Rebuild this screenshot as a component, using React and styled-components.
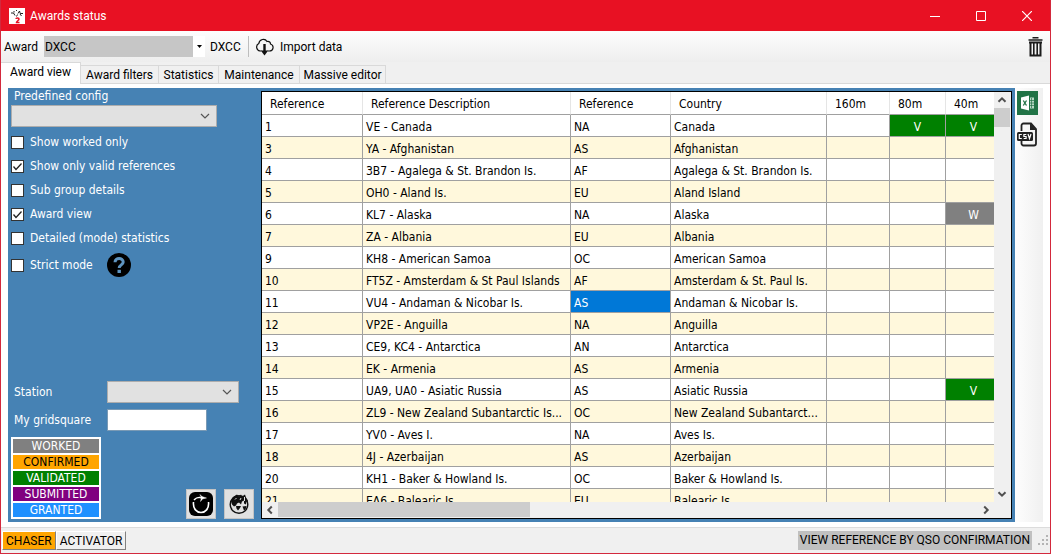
import React from "react";
import styled, { createGlobalStyle } from "styled-components";

const uiFont = `Roboto, "Noto Sans", "Liberation Sans", sans-serif`;
const gridFont = `"DejaVu Sans Condensed", "DejaVu Sans", "Liberation Sans", sans-serif`;

const GlobalStyle = createGlobalStyle`
  *, *::before, *::after { box-sizing: border-box; }
  body { margin: 0; font: 12px/16px ${uiFont}; color: #000; }
  button, input, select { font: inherit; color: inherit; margin: 0; border-radius: 0; }
  svg { display: block; flex: none; }
`;

const Window = styled.div`
  display: flex;
  flex-direction: column;
  height: 100vh;
  border: 1px solid #d3293d;
  border-top: 0;
  background: #f0f0f0;
  overflow: hidden;
`;

const TitleBar = styled.header`
  display: flex;
  align-items: center;
  height: 31px;
  flex: none;
  padding-left: 8px;
  background: #e81123;
  color: #fff;
`;

const Title = styled.h1`
  flex: 1;
  margin: 0 0 0 5px;
  font-size: 12px;
  font-weight: 400;
`;

const CaptionButton = styled.button`
  display: grid;
  place-items: center;
  width: 46px;
  height: 31px;
  padding: 0;
  border: 0;
  background: transparent;
`;

const Toolbar = styled.div`
  display: flex;
  align-items: center;
  height: 31px;
  flex: none;
  padding: 0 7px 0 3px;
  background: linear-gradient(#fdfdfd, #eeeeee);
`;

const ToolLabel = styled.label`
  width: 40px;
`;

const AwardBox = styled.span`
  display: grid;
  grid-template-columns: 149px 12px;
  align-items: center;
  height: 21px;
  margin-right: 5px;
  background: linear-gradient(90deg, #c6c6c6 149px, #fff 149px);
  & > * { grid-row: 1; }
  & > svg { grid-column: 2; justify-self: center; pointer-events: none; }
`;

const AwardSelect = styled.select`
  grid-column: 1 / 3;
  height: 21px;
  padding: 0 1px;
  border: 0;
  appearance: none;
  background: transparent;
`;

const ToolText = styled.span`
  width: 32px;
`;

const Separator = styled.span`
  width: 1px;
  height: 21px;
  margin: 0 6px;
  background: #bdbdbd;
`;

const ToolButton = styled.button`
  display: flex;
  align-items: center;
  gap: 6px;
  padding: 0;
  border: 0;
  background: transparent;
`;

const Spacer = styled.span`
  flex: 1;
`;

const TabStrip = styled.div`
  display: flex;
  align-items: flex-end;
  height: 22px;
  flex: none;
  box-shadow: inset 0 -1px #d9d9d9;
`;

const Tab = styled.button`
  height: ${(p) => (p.$active ? 22 : 19)}px;
  width: ${(p) => p.$width}px;
  padding: 0 0 ${(p) => (p.$active ? 3 : 0)}px;
  border: 1px solid #d9d9d9;
  border-width: ${(p) => (p.$active ? "1px 1px 0 0" : "1px 1px 1px 0")};
  background: ${(p) => (p.$active ? "#fff" : "#f0f0f0")};
  white-space: nowrap;
`;

const Page = styled.main`
  display: flex;
  flex: 1;
  min-height: 0;
  padding: 4px 7px 5px 7px;
  border-bottom: 1px solid #dcdcdc;
  background: #fff;
`;

const BluePanel = styled.div`
  display: flex;
  flex: 1;
  min-width: 0;
  padding: 3px 3px 3px 0;
  background: #4682b4;
`;

const Filters = styled.form`
  display: flex;
  flex-direction: column;
  width: 253px;
  flex: none;
  padding: 0 7px 0 3px;
  font-family: ${gridFont};
  color: #fff;
`;

const FieldLabel = styled.label`
  width: ${(p) => (p.$inline ? "96px" : "auto")};
  padding-left: 3px;
  line-height: ${(p) => (p.$inline ? "20px" : "10px")};
`;

const SelectBox = styled.span`
  display: grid;
  grid-template-columns: 1fr 17px;
  align-items: center;
  width: ${(p) => p.$width}px;
  & > * { grid-row: 1; }
  & > svg { grid-column: 2; pointer-events: none; }
`;

const Select = styled.select`
  grid-column: 1 / 3;
  height: 22px;
  border: 1px solid #adadad;
  background: #e1e1e1;
  color: #000;
  appearance: none;
`;

const ConfigField = styled.div`
  display: grid;
  gap: 4px;
`;

const Checks = styled.div`
  display: grid;
  grid-auto-rows: 24px;
  margin-top: 3px;
`;

const CheckLabel = styled.label`
  display: flex;
  align-items: center;
  gap: 6px;
`;

const CheckBox = styled.span`
  display: grid;
  width: 13px;
  height: 13px;
  & > * { grid-area: 1 / 1; }
  & > svg { pointer-events: none; visibility: hidden; }
  & > input:checked + svg { visibility: visible; }
`;

const CheckInput = styled.input`
  width: 13px;
  height: 13px;
  appearance: none;
  border: 1px solid #333;
  background: #fff;
`;

const StrictRow = styled.div`
  display: flex;
  align-items: center;
  gap: 14px;
  height: 30px;
`;

const HelpButton = styled.button`
  width: 24px;
  height: 24px;
  padding: 0;
  border: 0;
  background: transparent;
`;

const FieldRow = styled.div`
  display: flex;
  align-items: center;
  margin-bottom: 6px;
`;

const TextInput = styled.input`
  width: 100px;
  height: 22px;
  border: 1px solid #7a9ab5;
  background: #fff;
  color: #000;
`;

const FooterRow = styled.div`
  display: flex;
  align-items: flex-end;
  gap: 8px;
`;

const Legend = styled.ul`
  display: grid;
  gap: 2px;
  width: 90px;
  margin: 0;
  padding: 2px;
  list-style: none;
  background: #fff;
`;

const LegendItem = styled.li`
  height: 14px;
  line-height: 14px;
  text-align: center;
  background: ${(p) => p.$bg};
  color: ${(p) => p.$fg || "#fff"};
`;

const IconButton = styled.button`
  display: grid;
  place-items: center;
  width: 30px;
  height: 30px;
  padding: 0;
  border: 1px solid #c4c4c4;
  background: #e1e1e1;
`;

const GridFrame = styled.section`
  display: grid;
  grid-template: minmax(0, 1fr) 16px / minmax(0, 1fr) 17px;
  flex: 1;
  min-width: 0;
  border: 1px solid #000;
  background: #f0f0f0;
  font-family: ${gridFont};
`;

const GridView = styled.div`
  overflow: hidden;
  background: #fff;
`;

const Table = styled.table`
  width: 740px;
  table-layout: fixed;
  border-collapse: separate;
  border-spacing: 0;
`;

const Th = styled.th`
  height: 23px;
  padding: 1px 8px 0;
  border-right: 1px solid #e5e5e5;
  border-bottom: 1px solid #a0a0a0;
  text-align: left;
  font-weight: 400;
  white-space: nowrap;
`;

const Row = styled.tr`
  background: ${(p) => (p.$alt ? "#fff8dc" : "#fff")};
`;

const tones = {
  V: "background: #008000; color: #fff; text-align: center;",
  W: "background: #808080; color: #fff; text-align: center;",
  selected: "background: #0078d7; color: #fff;",
};

const Td = styled.td`
  height: 22px;
  padding: 2px 3px 0;
  border-right: 1px solid #a0a0a0;
  border-bottom: 1px solid #a0a0a0;
  line-height: 16px;
  white-space: nowrap;
  overflow: hidden;
  text-overflow: ellipsis;
  ${(p) => tones[p.$tone] || ""}
`;

const ScrollBar = styled.div`
  display: flex;
  flex-direction: ${(p) => (p.$vertical ? "column" : "row")};
  background: #f0f0f0;
`;

const ScrollButton = styled.button`
  display: grid;
  place-items: center;
  width: 16px;
  height: 16px;
  flex: none;
  padding: 0;
  border: 0;
  background: transparent;
`;

const Thumb = styled.span`
  width: ${(p) => (p.$vertical ? "16px" : "252px")};
  height: ${(p) => (p.$vertical ? "19px" : "15px")};
  background: #cdcdcd;
`;

const SideBar = styled.aside`
  display: flex;
  flex-direction: column;
  align-items: flex-start;
  gap: 7px;
  width: 28px;
  padding: 3px 0 0 2px;
  background: linear-gradient(90deg, #fdfdfd, #f0f0f0);
`;

const SideButton = styled.button`
  padding: 0;
  border: 0;
  background: transparent;
`;

const StatusBar = styled.footer`
  display: flex;
  align-items: center;
  height: 25px;
  flex: none;
  padding: 0 1px;
`;

const StatusButton = styled.button`
  height: 19px;
  padding: 0 3px;
  border: 1px solid;
  border-color: #fff #808080 #808080 #fff;
  background: ${(p) => (p.$active ? "#ffa500" : "#f0f0f0")};
`;

const StatusLabel = styled.span`
  height: 19px;
  margin-right: 6px;
  padding: 0 2px;
  line-height: 19px;
  background: #c0c0c0;
`;

const Chevron = ({ dir = "down", bold }) => {
  const turn = { down: 0, left: 90, up: 180, right: 270 }[dir];
  return (
    <svg width="10" height="10" viewBox="0 0 10 10" fill="none" stroke={bold ? "#505050" : "#555"} strokeWidth={bold ? 2 : 1.2}>
      <path d={bold ? "M1.5 3.2 5 6.7 8.5 3.2" : "M1 3 5 7 9 3"} transform={`rotate(${turn} 5 5)`} />
    </svg>
  );
};

const AppIcon = () => (
  <svg width="16" height="16" viewBox="0 0 16 16">
    <rect width="16" height="16" fill="#fff" />
    <path d="M2 5h2.500M4.500 5 6 7.500M5 3v1.500M7.500 8.500l1-2M9 5.500l1.500-2.500 .7 2.500H14M11 6l1.500 2M7.500 2v1" fill="none" stroke="#222" />
    <path d="M7 11c0-1.500 3-1.500 3 0 0 1.500-2.500 2-2.500 3.500h3" fill="none" stroke="#e81123" strokeWidth="1.500" />
  </svg>
);

const CloudIcon = () => (
  <svg width="19" height="18" viewBox="0 0 19 18" fill="none" stroke="#111">
    <path d="M6.500 13H5a4 4 0 0 1-1.200-7.500C4.500 1 10 0 12 3.500c2.500-.5 3.500 1 3.500 2.500 4 1.500 3 7-1 7h-2" strokeWidth="1.200" />
    <path d="M9.500 6v8" strokeWidth="2.400" />
    <path d="M5.800 12.500h7.400L9.500 17.500z" fill="#111" stroke="none" />
  </svg>
);

const TrashIcon = () => (
  <svg width="15" height="20" viewBox="0 0 15 20" fill="none" stroke="#1c1c1c">
    <path d="M4.500 .8h6M.5 3h14" strokeWidth="1.600" />
    <path d="M1 5.500h13M2.500 5v13.500h10V5" strokeWidth="2" />
    <path d="M5.800 6v12M9.200 6v12" strokeWidth="1.600" />
  </svg>
);

const HelpIcon = () => (
  <svg width="24" height="24" viewBox="0 0 24 24">
    <circle cx="12" cy="12" r="12" fill="#000" />
    <path d="M8 9.300C8 4.300 16.200 4.500 16.200 9c0 3-4 2.800-4 6" fill="none" stroke="#5f94bf" strokeWidth="3" />
    <rect x="10.500" y="16.800" width="3.400" height="3.200" fill="#5f94bf" />
  </svg>
);

const RefreshIcon = () => (
  <svg width="26" height="26" viewBox="0 0 26 26">
    <rect x="1" y="1" width="24" height="24" rx="6" fill="#000" />
    <path d="M5.500 11C4 25 22 25 20.500 11" fill="none" stroke="#fff" strokeWidth="1.600" />
    <path d="M6 9C7.500 7 9.500 6.300 12 6.300" fill="none" stroke="#fff" strokeWidth="1.300" />
    <path d="M12 3.500 14 5.500 18.500 7 14.500 8 12.500 10.500 13.200 7.500 10.500 6.500 13 6z" fill="#fff" stroke="#fff" strokeWidth=".4" />
  </svg>
);

const GlobeIcon = () => (
  <svg width="22" height="22" viewBox="0 0 22 22">
    <circle cx="11" cy="11.500" r="8.800" fill="none" stroke="#111" strokeWidth="1.400" />
    <path d="M3 8 5 4l4-2.500 2 2 2-2 1 2 3-2 1 3 2 3-2 2v2l-2-1v-3l-2 1-1 3-2-2-2 1-1 2-2 1-2-2zM8 13h5l-1 2-2 2.500-1.500-2zM14.500 13.500l4-.5-1 3.500-1.500 1z" fill="#111" />
    <path d="M7 6.500 8.500 5M12 7l1-2M16.500 4v4" stroke="#e1e1e1" strokeWidth="1" />
  </svg>
);

const ExcelIcon = () => (
  <svg width="21" height="24" viewBox="0 0 21 24">
    <rect width="21" height="24" fill="#217346" />
    <path d="M4 6.500 12 4.500v15l-8-2z" fill="#fff" />
    <path d="M13 6.500h4v11h-4z" fill="#b9d8c6" />
    <path d="M14.500 7v10M13 9.500h4M13 12h4M13 14.500h4" stroke="#217346" strokeWidth=".7" />
    <path d="M6.300 9.500l3.200 5M9.500 9.500l-3.200 5" stroke="#217346" strokeWidth="1.300" />
  </svg>
);

const CsvIcon = () => (
  <svg width="21" height="25" viewBox="0 0 21 25">
    <path d="M4.500 9V3.500a2 2 0 0 1 2-2H14l5 5.500v14.500a2 2 0 0 1-2 2H6.500a2 2 0 0 1-2-2V19" fill="none" stroke="#222" strokeWidth="1.800" />
    <path d="M13 1v7h6.500z" fill="#222" />
    <rect x="0" y="10" width="16" height="9" rx="1.500" fill="#222" />
    <path d="M4.800 12.500H2.300v4h2.500M9.300 12.500H6.900v2h2.200v2H6.700M11 12l1.500 4.500L14 12" fill="none" stroke="#fff" strokeWidth="1.200" />
  </svg>
);

const Grip = () => (
  <svg width="11" height="11" viewBox="0 0 11 11" fill="#b4b4b4">
    {[[8, 0], [4, 4], [8, 4], [0, 8], [4, 8], [8, 8]].map(([x, y]) => (
      <rect key={`${x}-${y}`} x={x} y={y} width="2" height="2" />
    ))}
  </svg>
);

const Check = ({ label, checked }) => (
  <CheckLabel>
    <CheckBox>
      <CheckInput type="checkbox" defaultChecked={checked} />
      <svg width="13" height="13" viewBox="0 0 13 13" fill="none" stroke="#222" strokeWidth="1.300">
        <path d="M2.500 6.500 5 9.500 10.500 3.500" />
      </svg>
    </CheckBox>
    {label}
  </CheckLabel>
);

const tabs = [
  ["Award view", 80],
  ["Award filters", 78],
  ["Statistics", 60],
  ["Maintenance", 81],
  ["Massive editor", 86],
];

const legend = [
  ["WORKED", "#808080"],
  ["CONFIRMED", "#ffa500", "#000"],
  ["VALIDATED", "#008000"],
  ["SUBMITTED", "#800080"],
  ["GRANTED", "#1e90ff"],
];

const columns = [
  ["Reference", 101],
  ["Reference Description", 208],
  ["Reference", 100],
  ["Country", 156],
  ["160m", 63],
  ["80m", 56],
  ["40m", 56],
];

const rows = [
  ["1", "VE - Canada", "NA", "Canada", "", "V", "V"],
  ["3", "YA - Afghanistan", "AS", "Afghanistan"],
  ["4", "3B7 - Agalega & St. Brandon Is.", "AF", "Agalega & St. Brandon Is."],
  ["5", "OH0 - Aland Is.", "EU", "Aland Island"],
  ["6", "KL7 - Alaska", "NA", "Alaska", "", "", "W"],
  ["7", "ZA - Albania", "EU", "Albania"],
  ["9", "KH8 - American Samoa", "OC", "American Samoa"],
  ["10", "FT5Z - Amsterdam & St Paul Islands", "AF", "Amsterdam & St. Paul Is."],
  ["11", "VU4 - Andaman & Nicobar Is.", "AS", "Andaman & Nicobar Is."],
  ["12", "VP2E - Anguilla", "NA", "Anguilla"],
  ["13", "CE9, KC4 - Antarctica", "AN", "Antarctica"],
  ["14", "EK - Armenia", "AS", "Armenia"],
  ["15", "UA9, UA0 - Asiatic Russia", "AS", "Asiatic Russia", "", "", "V"],
  ["16", "ZL9 - New Zealand Subantarctic Is...", "OC", "New Zealand Subantarct..."],
  ["17", "YV0 - Aves I.", "NA", "Aves Is."],
  ["18", "4J - Azerbaijan", "AS", "Azerbaijan"],
  ["20", "KH1 - Baker & Howland Is.", "OC", "Baker & Howland Is."],
  ["21", "EA6 - Balearic Is.", "EU", "Balearic Is."],
];

const toneOf = (ref, value, col) => {
  if (ref === "11" && col === 2) return "selected";
  return col > 3 ? value : undefined;
};

export default function App() {
  return (
    <Window>
      <GlobalStyle />
      <TitleBar>
        <AppIcon />
        <Title>Awards status</Title>
        <CaptionButton aria-label="Minimize">
          <svg width="10" height="10" stroke="#fff"><path d="M0 5.500h10" /></svg>
        </CaptionButton>
        <CaptionButton aria-label="Maximize">
          <svg width="10" height="10" stroke="#fff" fill="none"><path d="M.5 .5h9v9h-9z" /></svg>
        </CaptionButton>
        <CaptionButton aria-label="Close">
          <svg width="10" height="10" stroke="#fff" strokeWidth="1.200"><path d="M0 0 10 10M10 0 0 10" /></svg>
        </CaptionButton>
      </TitleBar>

      <Toolbar>
        <ToolLabel htmlFor="award">Award</ToolLabel>
        <AwardBox>
          <AwardSelect id="award"><option>DXCC</option></AwardSelect>
          <svg width="5" height="3"><path d="M0 0h5L2.500 3z" /></svg>
        </AwardBox>
        <ToolText>DXCC</ToolText>
        <Separator />
        <ToolButton><CloudIcon />Import data</ToolButton>
        <Spacer />
        <ToolButton aria-label="Delete"><TrashIcon /></ToolButton>
      </Toolbar>

      <TabStrip role="tablist">
        {tabs.map(([name, width], i) => (
          <Tab key={name} role="tab" aria-selected={i === 0} $active={i === 0} $width={width}>{name}</Tab>
        ))}
      </TabStrip>

      <Page>
        <BluePanel>
          <Filters onSubmit={(e) => e.preventDefault()}>
            <ConfigField>
              <FieldLabel htmlFor="config">Predefined config</FieldLabel>
              <SelectBox $width={206}>
                <Select id="config" />
                <Chevron />
              </SelectBox>
            </ConfigField>
            <Checks>
              <Check label="Show worked only" />
              <Check label="Show only valid references" checked />
              <Check label="Sub group details" />
              <Check label="Award view" checked />
              <Check label="Detailed (mode) statistics" />
            </Checks>
            <StrictRow>
              <Check label="Strict mode" />
              <HelpButton type="button" aria-label="Help"><HelpIcon /></HelpButton>
            </StrictRow>
            <Spacer />
            <FieldRow>
              <FieldLabel htmlFor="station" $inline>Station</FieldLabel>
              <SelectBox $width={132}>
                <Select id="station" />
                <Chevron />
              </SelectBox>
            </FieldRow>
            <FieldRow>
              <FieldLabel htmlFor="grid" $inline>My gridsquare</FieldLabel>
              <TextInput id="grid" type="text" />
            </FieldRow>
            <FooterRow>
              <Legend>
                {legend.map(([name, bg, fg]) => (
                  <LegendItem key={name} $bg={bg} $fg={fg}>{name}</LegendItem>
                ))}
              </Legend>
              <Spacer />
              <IconButton type="button" aria-label="Refresh"><RefreshIcon /></IconButton>
              <IconButton type="button" aria-label="Map"><GlobeIcon /></IconButton>
            </FooterRow>
          </Filters>

          <GridFrame>
            <GridView>
              <Table>
                <colgroup>
                  {columns.map(([name, width], i) => <col key={i} width={width} />)}
                </colgroup>
                <thead>
                  <tr>{columns.map(([name], i) => <Th key={i} scope="col">{name}</Th>)}</tr>
                </thead>
                <tbody>
                  {rows.map((row, r) => (
                    <Row key={row[0]} $alt={r % 2 === 1}>
                      {columns.map((_, c) => (
                        <Td key={c} $tone={toneOf(row[0], row[c], c)}>{row[c]}</Td>
                      ))}
                    </Row>
                  ))}
                </tbody>
              </Table>
            </GridView>
            <ScrollBar $vertical>
              <ScrollButton aria-label="Scroll up"><Chevron dir="up" bold /></ScrollButton>
              <Thumb $vertical />
              <Spacer />
              <ScrollButton aria-label="Scroll down"><Chevron bold /></ScrollButton>
            </ScrollBar>
            <ScrollBar>
              <ScrollButton aria-label="Scroll left"><Chevron dir="left" bold /></ScrollButton>
              <Thumb />
              <Spacer />
              <ScrollButton aria-label="Scroll right"><Chevron dir="right" bold /></ScrollButton>
            </ScrollBar>
          </GridFrame>
        </BluePanel>
        <SideBar>
          <SideButton aria-label="Export to Excel"><ExcelIcon /></SideButton>
          <SideButton aria-label="Export to CSV"><CsvIcon /></SideButton>
        </SideBar>
      </Page>

      <StatusBar>
        <StatusButton $active>CHASER</StatusButton>
        <StatusButton>ACTIVATOR</StatusButton>
        <Spacer />
        <StatusLabel>VIEW REFERENCE BY QSO CONFIRMATION</StatusLabel>
        <Grip />
      </StatusBar>
    </Window>
  );
}
